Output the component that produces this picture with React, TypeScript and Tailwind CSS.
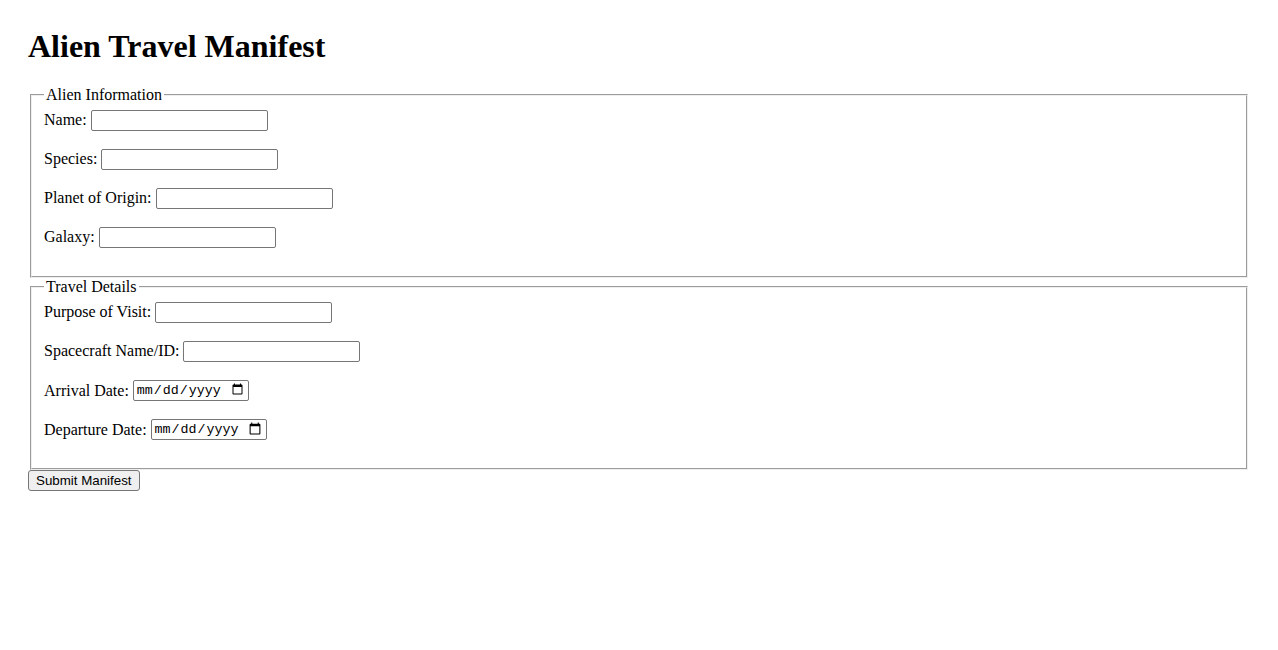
import React from 'react';

const textInput =
  "w-[177px] h-[21px] align-baseline border border-[#767676] rounded-[2px] bg-white px-[2px] py-[1px] font-['Liberation_Sans',sans-serif] text-[13.33px]";

const dateInput =
  "w-[116px] h-[21px] align-[2px] border border-[#767676] rounded-[2px] bg-white px-[2px] py-[1px] font-['Liberation_Mono',monospace] text-[13.33px]";

const Row: React.FC<{ label: string; id: string; type?: string }> = ({ label, id, type = 'text' }) => (
  <div className="mb-[18px] leading-[19px]">
    <label htmlFor={id}>{label}</label>{' '}
    <input id={id} type={type} className={type === 'date' ? dateInput : textInput} />
  </div>
);

const Fieldset: React.FC<{ title: string; children: React.ReactNode }> = ({ title, children }) => (
  <fieldset className="mx-[2px] [border:2px_groove_ThreeDFace] pt-[0.35em] px-3 pb-[0.625em] min-w-min">
    <legend className="px-[2px]">{title}</legend>
    {children}
  </fieldset>
);

const App: React.FC = () => {
  return (
    <div className="min-h-[650px] bg-white p-7 text-black text-[16px] leading-[normal] font-['Liberation_Serif','Times_New_Roman',serif]">
      <h1 className="text-[32px] leading-[normal] font-bold mb-[21.44px]">Alien Travel Manifest</h1>
      <form onSubmit={e => e.preventDefault()}>
        <Fieldset title="Alien Information">
          <Row label="Name:" id="name" />
          <Row label="Species:" id="species" />
          <Row label="Planet of Origin:" id="planet" />
          <Row label="Galaxy:" id="galaxy" />
        </Fieldset>
        <Fieldset title="Travel Details">
          <Row label="Purpose of Visit:" id="purpose" />
          <Row label="Spacecraft Name/ID:" id="craft" />
          <Row label="Arrival Date:" id="arrival" type="date" />
          <Row label="Departure Date:" id="departure" type="date" />
        </Fieldset>
        <button
          type="submit"
          className="h-[21px] bg-[#efefef] border border-[#767676] rounded-[3px] px-[7px] py-[1px] font-['Liberation_Sans',Arial,sans-serif] text-[13.33px] leading-[normal]"
        >
          Submit Manifest
        </button>
      </form>
    </div>
  );
};

export default App;
